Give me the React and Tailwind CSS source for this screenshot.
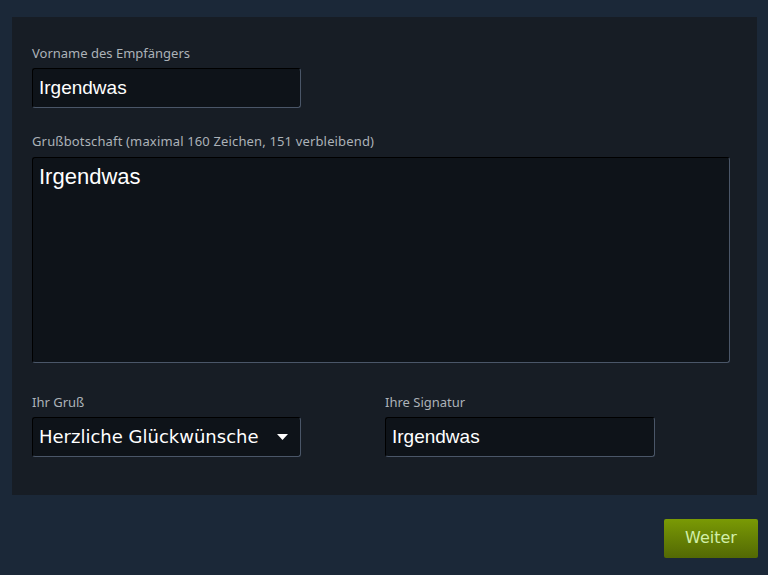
export default function App() {
  const field =
    "h-[40px] rounded-[3px] border border-t-black border-l-black border-r-[#4a5668] border-b-[#4a5668] bg-[#0e1319] px-[6px] text-[19px] text-white outline-none";
  const label = "block text-[13px] text-[#acb2b8]";
  const labelFont = { fontFamily: "'Noto Sans', sans-serif" };

  return (
    <div
      className="min-h-[575px] w-full bg-[#1b2838] pt-[17px]"
      style={{ fontFamily: "'Liberation Sans', Arial, sans-serif" }}
    >
      {/* ================= FORM PANEL ================= */}
      <div className="mx-[11px] ml-[12px] bg-[#171d25] px-[20px] pb-[38px] pt-[27px]">
        <label className={label} style={labelFont}>
          Vorname des Empfängers
        </label>
        <input defaultValue="Irgendwas" className={`${field} mt-[4px] block w-[269px]`} />

        <label className={`${label} mt-[24px] tracking-[0.15px]`} style={labelFont}>
          Grußbotschaft (maximal 160 Zeichen, 151 verbleibend)
        </label>
        <textarea
          defaultValue="Irgendwas"
          className="mt-[6px] block h-[206px] w-[698px] resize-none rounded-[3px] border border-b-[#4a5668] border-l-black border-r-[#4a5668] border-t-black bg-[#0e1319] px-[6px] py-[2px] text-[22px] text-white outline-none"
        />

        <div className="mt-[30px] flex gap-[84px]">
          <div>
            <label className={label} style={labelFont}>
              Ihr Gruß
            </label>
            <div className={`${field} mt-[4px] flex w-[269px] items-center justify-between pr-[12px]`}>
              <span style={{ fontFamily: "'DejaVu Sans', Verdana, sans-serif" }} className="text-[18px]">
                Herzliche Glückwünsche
              </span>
              <svg width="11" height="6" viewBox="0 0 11 6">
                <path d="M0 0 H11 L5.5 6 Z" fill="#ffffff" />
              </svg>
            </div>
          </div>
          <div>
            <label className={label} style={labelFont}>
              Ihre Signatur
            </label>
            <input defaultValue="Irgendwas" className={`${field} mt-[4px] block w-[270px]`} />
          </div>
        </div>
      </div>

      {/* ================= ACTION ================= */}
      <div className="flex justify-end pr-[10px] pt-[24px]">
        <button
          className="h-[39px] w-[94px] rounded-[2px] bg-gradient-to-b from-[#7a9a05] to-[#536904] text-[16px] text-[#d2efa9]"
          style={{ fontFamily: "'DejaVu Sans', Verdana, sans-serif" }}
        >
          Weiter
        </button>
      </div>
    </div>
  );
}
